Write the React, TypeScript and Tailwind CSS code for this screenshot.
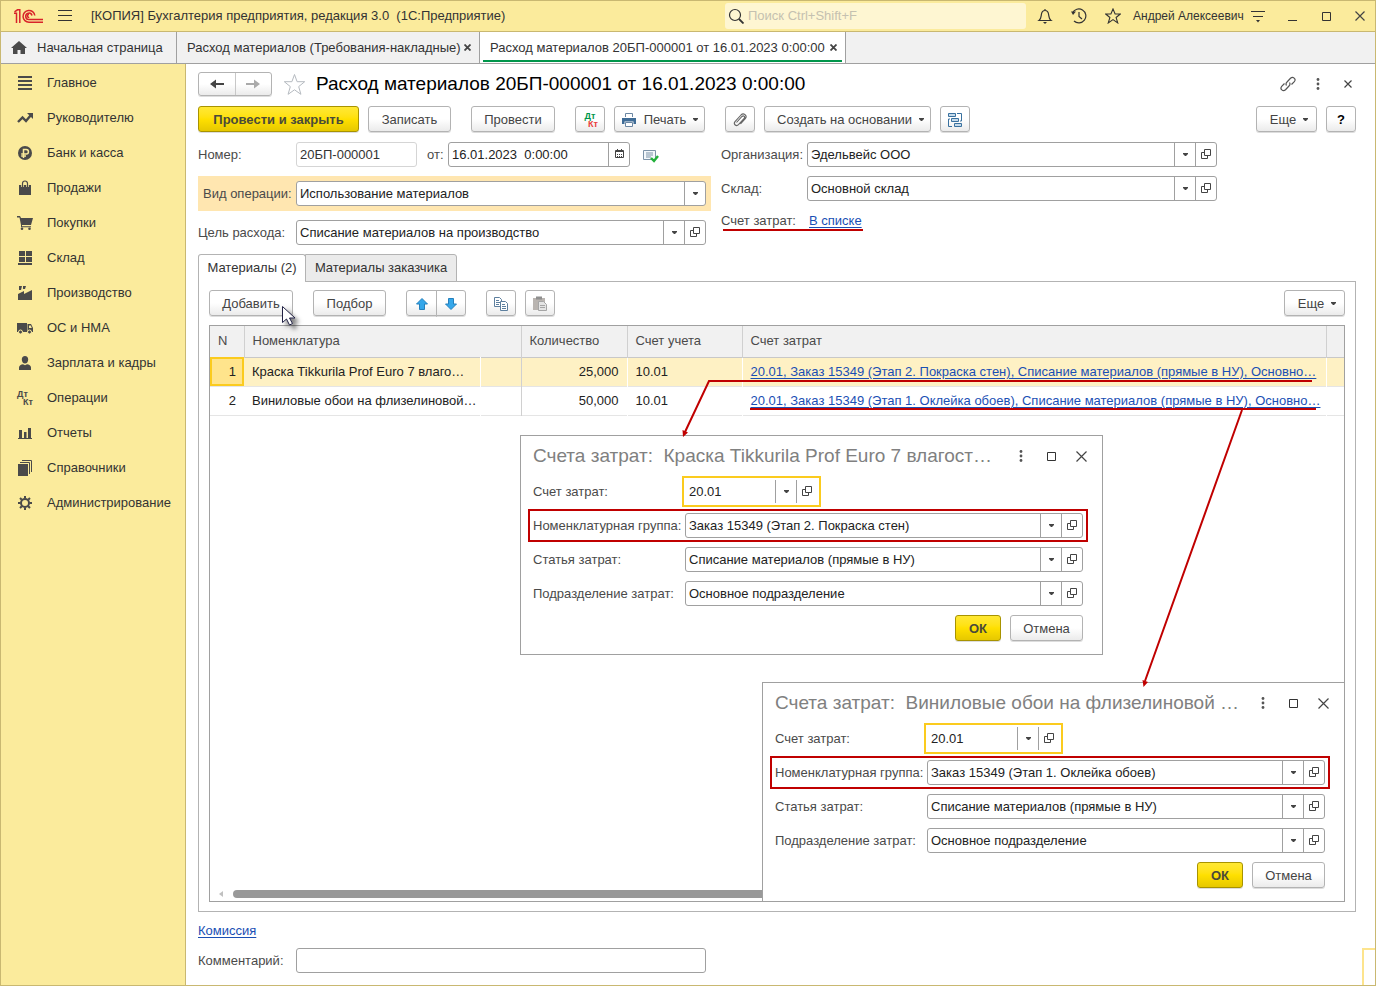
import React, { useState } from 'react';

const Glyph: React.FC<{ children: React.ReactNode; size?: number; className?: string }> = ({ children, size = 16, className = '' }) => (
  <svg width={size} height={size} viewBox={`0 0 ${size} ${size}`} fill="none" className={`shrink-0 ${className}`} aria-hidden="true">
    {children}
  </svg>
);

const Caret = () => (
  <svg width="5" height="3" viewBox="0 0 5 3" className="shrink-0" aria-hidden="true">
    <path d="M0 0h5v1L3 3H2L0 1z" fill="#444" />
  </svg>
);

const OpenIcon = () => (
  <Glyph size={10}>
    <path d="M3.5 0.5h6v6h-6z M3 3.5H0.5v6h6V7" stroke="#444" />
  </Glyph>
);

const CloseIcon: React.FC<{ size: number; color?: string }> = ({ size, color = '#444' }) => (
  <Glyph size={size}>
    <path d={`M0.5 0.5L${size - 0.5} ${size - 0.5}M${size - 0.5} 0.5L0.5 ${size - 0.5}`} stroke={color} strokeWidth="1.2" />
  </Glyph>
);

const DotsIcon = () => (
  <Glyph size={12}>
    <circle cx="6" cy="1.5" r="1.4" fill="#555" />
    <circle cx="6" cy="6" r="1.4" fill="#555" />
    <circle cx="6" cy="10.5" r="1.4" fill="#555" />
  </Glyph>
);

const DtKt: React.FC<{ top: string; bottom: string }> = ({ top, bottom }) => (
  <span className="flex w-4 shrink-0 flex-col text-[9px] leading-[8px] font-bold">
    <span className={top}>Дт</span>
    <span className={`self-end ${bottom}`}>Кт</span>
  </span>
);

const menu = [
  { label: 'Главное', icon: <path d="M1 1h14v2H1zM1 5h14v2H1zM1 9h14v2H1zM1 13h14v2H1z" fill="#4a4a4a" /> },
  {
    label: 'Руководителю',
    icon: (
      <>
        <path d="M1 12L5.5 7.5L9 11L14 5" stroke="#4a4a4a" strokeWidth="2.4" />
        <path d="M10 3h6v6z" fill="#4a4a4a" />
      </>
    ),
  },
  {
    label: 'Банк и касса',
    icon: (
      <>
        <circle cx="8" cy="8" r="7" fill="#4a4a4a" />
        <path d="M6.5 13V4.5h2.7a2.2 2.2 0 0 1 0 4.5H4.2M4.2 11H9" stroke="#fbeb9c" strokeWidth="1.5" />
      </>
    ),
  },
  {
    label: 'Продажи',
    icon: (
      <>
        <path d="M2 5h12v10H2z" fill="#4a4a4a" />
        <path d="M5.5 7V3.5a2.5 2.5 0 0 1 5 0V7" stroke="#fbeb9c" strokeWidth="2.6" />
        <path d="M5.5 7V3.5a2.5 2.5 0 0 1 5 0V7" stroke="#4a4a4a" strokeWidth="1.2" />
      </>
    ),
  },
  {
    label: 'Покупки',
    icon: (
      <>
        <path d="M0 1h3l1 2h12l-2 7H5v1.2h9v1H4V10L2.5 2.5H0z" fill="#4a4a4a" />
        <circle cx="5" cy="13.8" r="1.3" fill="#4a4a4a" />
        <circle cx="12.5" cy="13.8" r="1.3" fill="#4a4a4a" />
      </>
    ),
  },
  { label: 'Склад', icon: <path d="M2 1h6v5H2zM9 1h6v5H9zM2 7h6v5H2zM9 7h6v5H9zM1 13h14v2H1z" fill="#4a4a4a" /> },
  { label: 'Производство', icon: <path d="M1 15V9l6-3v3l8-4v10zM2 1h3l-1 4H2zM6 1h3L8 4H6z" fill="#4a4a4a" /> },
  {
    label: 'ОС и НМА',
    icon: (
      <>
        <path d="M0 3h10v9H0zM10.5 4H14l2 4v4h-5.5z" fill="#4a4a4a" />
        <path d="M12 5.5h1.8l1 2.5H12z" fill="#fbeb9c" />
        <circle cx="3.5" cy="12" r="2" fill="#4a4a4a" stroke="#fbeb9c" />
        <circle cx="12.5" cy="12" r="2" fill="#4a4a4a" stroke="#fbeb9c" />
      </>
    ),
  },
  {
    label: 'Зарплата и кадры',
    icon: <path d="M8 1c2 0 3.2 1.4 3.2 3.4C11.2 6.7 9.8 8.5 8 8.5S4.8 6.7 4.8 4.4C4.8 2.4 6 1 8 1zM2 15v-2.5C2 10.5 4 9.5 6 9.3l2 1 2-1c2 .2 4 1.2 4 3.2V15z" fill="#4a4a4a" />,
  },
  { label: 'Операции', icon: null },
  { label: 'Отчеты', icon: <path d="M1 13h14v1H1zM2 5h3v8H2zM7 7h2.5v6H7zM11 3h3v10h-3z" fill="#4a4a4a" /> },
  {
    label: 'Справочники',
    icon: (
      <>
        <path d="M1 4h10v12H1z" fill="#4a4a4a" />
        <path d="M3 2.5h9.5V14M5 0.5h9.5V12" stroke="#4a4a4a" />
      </>
    ),
  },
  {
    label: 'Администрирование',
    icon: (
      <>
        <circle cx="8" cy="8" r="4" stroke="#4a4a4a" strokeWidth="2" />
        <path d="M8 1v2.5M8 12.5V15M1 8h2.5M12.5 8H15M3 3l1.8 1.8M11.2 11.2L13 13M13 3l-1.8 1.8M4.8 11.2L3 13" stroke="#4a4a4a" strokeWidth="2" />
      </>
    ),
  },
];

interface BtnProps extends React.ButtonHTMLAttributes<HTMLButtonElement> {
  primary?: boolean;
}

const Btn: React.FC<BtnProps> = ({ primary, className = '', children, ...rest }) => (
  <button
    type="button"
    className={`flex h-[26px] shrink-0 items-center justify-center rounded-[3px] border pt-px shadow-[0_1px_0_#00000022] whitespace-nowrap ${
      primary
        ? 'border-[#a89300] bg-linear-to-b from-[#ffe833] via-[#ffe000] to-[#e6c800] font-bold text-[#4a4a3a]'
        : 'border-[#b3b3b3] bg-linear-to-b from-white via-white to-[#ebebeb] text-[#444]'
    } ${className}`}
    {...rest}
  >
    {children}
  </button>
);

interface FieldProps {
  id: string;
  value: string;
  className?: string;
  focused?: boolean;
}

// Text box with the drop-down and "open" buttons on its right
const ComboField: React.FC<FieldProps> = ({ id, value, className = '', focused }) => (
  <div
    className={`flex h-[25px] border bg-white text-[#222] ${
      focused ? 'border-transparent outline-2 outline-offset-1 outline-[#fbcb1e]' : 'rounded-[3px] border-[#a0a0a0]'
    } ${className}`}
  >
    <input id={id} defaultValue={value} className="w-0 min-w-0 flex-1 px-[3px] outline-none" />
    <button type="button" aria-label="Выбрать" className="flex w-[21px] items-center justify-center border-l border-[#a0a0a0]">
      <Caret />
    </button>
    <button type="button" aria-label="Открыть" className="flex w-[21px] items-center justify-center border-l border-[#a0a0a0] pb-px">
      <OpenIcon />
    </button>
  </div>
);

interface AccountDialogProps {
  id: string;
  title: string;
  group: string;
  className: string;
}

const AccountDialog: React.FC<AccountDialogProps> = ({ id, title, group, className }) => (
  <section role="dialog" aria-label={title} className={`absolute h-[220px] w-[583px] border border-[#a0a0a0] bg-white pr-[19px] pl-3 ${className}`}>
    <div className="flex h-[43px] items-center pb-[3px]">
      <h2 className="flex-1 text-[19px] whitespace-pre text-[#808080]">{title}</h2>
      <div className="-mr-1 flex items-center gap-5">
        <button type="button" aria-label="Еще действия"><DotsIcon /></button>
        <button type="button" aria-label="Развернуть">
          <Glyph size={9}><path d="M0.5 0.5h8v8h-8z" stroke="#333" /></Glyph>
        </button>
        <button type="button" aria-label="Закрыть"><CloseIcon size={11} /></button>
      </div>
    </div>
    <div className="flex flex-col gap-[9px]">
      <div className="flex items-center">
        <label htmlFor={`${id}-account`} className="w-[152px]">Счет затрат:</label>
        <ComboField id={`${id}-account`} value="20.01" focused className="w-[133px]" />
      </div>
      <div className="relative flex items-center">
        <label htmlFor={`${id}-group`} className="w-[152px] whitespace-nowrap">Номенклатурная группа:</label>
        <ComboField id={`${id}-group`} value={group} className="flex-1" />
        <div className="pointer-events-none absolute -inset-x-[5px] -inset-y-1 border-2 border-[#c00000]" />
      </div>
      <div className="flex items-center">
        <label htmlFor={`${id}-item`} className="w-[152px]">Статья затрат:</label>
        <ComboField id={`${id}-item`} value="Списание материалов (прямые в НУ)" className="flex-1" />
      </div>
      <div className="flex items-center">
        <label htmlFor={`${id}-unit`} className="w-[152px]">Подразделение затрат:</label>
        <ComboField id={`${id}-unit`} value="Основное подразделение" className="flex-1" />
      </div>
      <div className="flex justify-end gap-[9px]">
        <Btn primary className="w-[46px]">ОК</Btn>
        <Btn className="w-[73px]">Отмена</Btn>
      </div>
    </div>
  </section>
);

const rows = [
  { n: 1, name: 'Краска Tikkurila Prof Euro 7 влаго…', qty: '25,000', acc: '10.01', cost: '20.01, Заказ 15349 (Этап 2. Покраска стен), Списание материалов (прямые в НУ), Основно…' },
  { n: 2, name: 'Виниловые обои на флизелиновой…', qty: '50,000', acc: '10.01', cost: '20.01, Заказ 15349 (Этап 1. Оклейка обоев), Списание материалов (прямые в НУ), Основно…' },
];

const TitleBar = () => (
  <header className="flex h-[31px] items-center border-b border-[#c9b871] bg-[#fbeb9c] pr-[10px] pl-[13px] text-[#333]">
    <svg width="29" height="15" viewBox="0 0 29 15" fill="none" stroke="#d8232a" strokeWidth="1.5" aria-label="1С">
      <path d="M0 4.2H2.5V14M0.5 2.8L3.5 0.8H5.8V14" />
      <path d="M20.8 6.5A5.9 5.9 0 1 0 15 13.2H29" />
      <path d="M18 6.5A3.2 3.2 0 1 0 15 10.5H29" />
      <path d="M15 5.5a1.4 1.4 0 1 0 0.2 2.7" />
    </svg>
    <button type="button" aria-label="Меню" className="ml-[15px]">
      <Glyph size={14}><path d="M0 1.5h14M0 6.5h14M0 11.5h14" stroke="#333" /></Glyph>
    </button>
    <h1 className="ml-[19px] flex-1 whitespace-pre">[КОПИЯ] Бухгалтерия предприятия, редакция 3.0  (1С:Предприятие)</h1>
    <label className="flex h-[26px] w-[301px] items-center gap-1 rounded-[3px] bg-[#fef6d2] px-[3px]">
      <Glyph>
        <circle cx="7" cy="7" r="5.5" stroke="#333" strokeWidth="1.2" />
        <path d="M11 11l4.5 4.5" stroke="#333" strokeWidth="1.8" />
      </Glyph>
      <input type="search" aria-label="Поиск" placeholder="Поиск Ctrl+Shift+F" className="min-w-0 flex-1 outline-none placeholder:text-[#c5c1b0]" />
    </label>
    <button type="button" aria-label="Оповещения" className="ml-[11px]">
      <Glyph>
        <path d="M8 1v1.5M2 12.5h12c-2-1.5-2-3-2.3-5.5C11.4 4 10 2.5 8 2.5S4.6 4 4.3 7C4 9.5 4 11 2 12.5z" stroke="#333" strokeWidth="1.2" />
        <path d="M6 14h4l-2 2z" fill="#333" />
      </Glyph>
    </button>
    <button type="button" aria-label="История" className="ml-[18px]">
      <Glyph>
        <path d="M1.5 5A7 7 0 1 1 3 13M8 4v4.5l3 2.5" stroke="#333" strokeWidth="1.2" />
        <path d="M0 3.5h5L2 7z" fill="#333" />
      </Glyph>
    </button>
    <button type="button" aria-label="Избранное" className="ml-[18px]">
      <Glyph>
        <path d="M8 1l2.1 5h5.2l-4.2 3.5 1.6 5.4L8 11.600l-4.7 3.3 1.6-5.4L0.7 6h5.2z" stroke="#333" strokeWidth="1.1" />
      </Glyph>
    </button>
    <span className="ml-3 w-[104px] text-[12px] whitespace-nowrap">Андрей Алексеевич</span>
    <button type="button" aria-label="Настройки" className="ml-[13px]">
      <Glyph>
        <path d="M1 3.5h14M3 8.5h10" stroke="#333" strokeWidth="1.2" />
        <path d="M6 12h4l-2 2.5z" fill="#333" />
      </Glyph>
    </button>
    <button type="button" aria-label="Свернуть" className="ml-[22px]">
      <Glyph size={9}><path d="M0 8.5h9" stroke="#333" /></Glyph>
    </button>
    <button type="button" aria-label="Развернуть" className="ml-[25px]">
      <Glyph size={9}><path d="M0.5 0.5h8v8h-8z" stroke="#333" /></Glyph>
    </button>
    <button type="button" aria-label="Закрыть" className="ml-[24px]">
      <CloseIcon size={10} />
    </button>
  </header>
);

const TabBar = () => (
  <nav className="flex h-8 shrink-0 border-b border-[#a0a0a0] bg-[#f1f1f1] text-[#333]">
    <a href="#home" className="flex w-[176px] shrink-0 items-center gap-[10px] border-r border-[#a0a0a0] pl-[10px]">
      <Glyph><path d="M8 1L16 8h-2v6H9.500V10h-3v4H2V8H0z" fill="#4a4a4a" /></Glyph>
      Начальная страница
    </a>
    <div className="flex w-[303px] shrink-0 items-center justify-between border-r border-[#a0a0a0] pr-2 pl-[10px]">
      <a href="#list" className="whitespace-nowrap">Расход материалов (Требования-накладные)</a>
      <button type="button" aria-label="Закрыть вкладку">
        <Glyph size={7}><path d="M0.5 0.5l6 6M6.5 0.5l-6 6" stroke="#444" strokeWidth="1.8" /></Glyph>
      </button>
    </div>
    <div className="flex w-[366px] shrink-0 border-r border-[#a0a0a0] bg-white px-[3px] pb-px">
      <div className="flex flex-1 items-center justify-between border-b-2 border-[#00964b] pt-[3px] pr-[5px] pl-[7px]">
        <a href="#doc" className="whitespace-nowrap">Расход материалов 20БП-000001 от 16.01.2023 0:00:00</a>
        <button type="button" aria-label="Закрыть вкладку">
          <Glyph size={7}><path d="M0.5 0.5l6 6M6.5 0.5l-6 6" stroke="#444" strokeWidth="1.8" /></Glyph>
        </button>
      </div>
    </div>
  </nav>
);

const Sidebar = () => (
  <aside className="w-[185px] shrink-0 border-r border-[#c9b871] bg-[#fbeb9c] pt-px">
    {menu.map(item => (
      <a key={item.label} href="#section" className="flex h-[35px] items-center gap-[14px] pl-4 text-[#333]">
        {item.icon ? <Glyph>{item.icon}</Glyph> : <DtKt top="text-[#4a4a4a]" bottom="text-[#4a4a4a]" />}
        {item.label}
      </a>
    ))}
  </aside>
);

const Toolbar = () => (
  <div className="mt-[10px] flex gap-5">
    <div className="flex gap-[9px]">
      <Btn primary className="w-[161px]">Провести и закрыть</Btn>
      <Btn className="w-[83px]">Записать</Btn>
    </div>
    <Btn className="w-[84px]">Провести</Btn>
    <div className="flex gap-[9px]">
      <Btn className="w-[30px]" aria-label="Проводки"><DtKt top="text-[#00964b]" bottom="text-[#e8403c]" /></Btn>
      <Btn className="w-[91px] gap-[7px]">
        <Glyph>
          <path d="M4.5 5V1.5h7V5M4.5 10.5h7v4h-7z" stroke="#6b87a3" fill="#fff" />
          <path d="M1 6h14v6h-2.5V9.5h-9V12H1z" fill="#3f6c96" />
        </Glyph>
        Печать
        <Caret />
      </Btn>
    </div>
    <div className="flex gap-[9px]">
      <Btn className="w-[30px]" aria-label="Прикрепленные файлы">
        <Glyph>
          <path d="M4.500 10.500L10 4.500c1.500-1.500 3.500 0.300 2.200 1.800L6.500 12.700C4.300 15 1 12.200 3 9.700L9 3c2.500-2.600 6.800 0.500 4.300 3.700L8.500 12" stroke="#666" strokeWidth="1.1" />
        </Glyph>
      </Btn>
      <Btn className="w-[167px] gap-[7px] pl-[6px]">
        Создать на основании
        <Caret />
      </Btn>
      <Btn className="w-[30px]" aria-label="Структура подчиненности">
        <Glyph>
          <path d="M1.5 1.5h7v3h-7zM4.5 6.5h7v3h-7zM7.5 11.5h7v3h-7z" fill="#c5daea" stroke="#39719f" />
          <path d="M10 1.5h4.5V9H13M5 14.5H1.5V7H3" stroke="#39719f" />
        </Glyph>
      </Btn>
    </div>
    <div className="ml-auto flex gap-[9px]">
      <Btn className="w-[61px] gap-[7px] pl-[5px]">Еще<Caret /></Btn>
      <Btn className="w-[30px] font-bold text-black">?</Btn>
    </div>
  </div>
);

const App: React.FC = () => {
  const [selected, setSelected] = useState(1);

  return (
    <div className="relative flex min-h-screen flex-col border border-[#c9b871] bg-white font-['Liberation_Sans',Arial,sans-serif] text-[13px] leading-4 text-[#4a4a4a]">
      <TitleBar />
      <TabBar />
      <div className="flex flex-1">
        <Sidebar />
        <main className="relative flex min-w-0 flex-1 flex-col pt-2 pr-[19px] pb-3 pl-3">
          <div className="flex h-6 items-center">
            <div className="flex h-6 w-[74px] rounded-[3px] border border-[#b3b3b3] bg-linear-to-b from-white via-white to-[#ebebeb] shadow-[0_1px_0_#00000022]">
              <button type="button" aria-label="Назад" className="flex flex-1 items-center justify-center border-r border-[#c8c8c8]">
                <Glyph size={14}><path d="M0 7l6-4.500V6h8v2H6v3.500z" fill="#444" /></Glyph>
              </button>
              <button type="button" aria-label="Вперед" className="flex flex-1 items-center justify-center">
                <Glyph size={14}><path d="M14 7L8 2.500V6H0v2h8v3.500z" fill="#aaa" /></Glyph>
              </button>
            </div>
            <button type="button" aria-label="В избранное" className="ml-[11px]">
              <Glyph size={23}>
                <path d="M11.5 1.5l2.6 7.2h7.6l-6 4.9 2.2 7.7-6.4-4.5-6.4 4.5 2.2-7.7-6-4.9h7.6z" stroke="#b5bac0" />
              </Glyph>
            </button>
            <h2 className="ml-[10px] flex-1 text-[19px] leading-6 text-black">Расход материалов 20БП-000001 от 16.01.2023 0:00:00</h2>
            <div className="mr-1 flex items-center">
              <button type="button" aria-label="Ссылка">
                <Glyph>
                  <path d="M6.500 9.500c-1-1.500-0.500-2.500 0.500-3.500l3.500-3.700c2.500-2.300 6 0.700 3.800 3.400L11.500 8.500M9.500 6.500c1 1.500 0.500 2.500-0.500 3.500l-3.500 3.700c-2.500 2.300-6-0.700-3.800-3.400L4.500 7.500" stroke="#555" strokeWidth="1.2" />
                </Glyph>
              </button>
              <button type="button" aria-label="Еще действия" className="ml-4"><DotsIcon /></button>
              <button type="button" aria-label="Закрыть" className="ml-5"><CloseIcon size={8} /></button>
            </div>
          </div>

          <Toolbar />

          <div className="mt-[10px] flex gap-[10px]">
            <div className="flex w-[513px] shrink-0 flex-col gap-[9px]">
              <div className="flex items-center">
                <label htmlFor="number" className="w-[98px]">Номер:</label>
                <input id="number" defaultValue="20БП-000001" readOnly className="h-[25px] w-[121px] rounded-[3px] border border-[#d5d5d5] px-[3px] text-[#333]" />
                <label htmlFor="date" className="ml-[10px] w-[21px]">от:</label>
                <div className="flex h-[25px] w-[182px] rounded-[3px] border border-[#a0a0a0] text-[#222]">
                  <input id="date" defaultValue="16.01.2023  0:00:00" className="min-w-0 flex-1 px-[3px] outline-none" />
                  <button type="button" aria-label="Календарь" className="flex w-[21px] items-center justify-center border-l border-[#a0a0a0] pb-[3px]">
                    <Glyph size={9}>
                      <path d="M0.5 1.5h8v7h-8zM0 2.5h9M2.5 0v2M6.5 0v2" stroke="#444" />
                      <path d="M2 5.5h5M2 7.5h5" stroke="#444" strokeDasharray="1 1" />
                    </Glyph>
                  </button>
                </div>
                <Glyph className="ml-[13px]">
                  <path d="M0.5 3.5h12v9h-12z" fill="#f4f8fb" stroke="#7d93a8" />
                  <path d="M3 6h7M3 8h7M3 10h5" stroke="#7d93a8" />
                  <path d="M8 11l3 3 4-5" stroke="#22b03a" strokeWidth="2.4" />
                </Glyph>
              </div>
              <div className="flex h-[35px] items-center bg-[#ffe6b0] px-[5px]">
                <label htmlFor="kind" className="w-[93px] whitespace-nowrap">Вид операции:</label>
                <div className="relative flex h-[25px] flex-1">
                  <select id="kind" className="w-full appearance-none rounded-[3px] border border-[#a0a0a0] bg-white px-[3px] text-[#222]">
                    <option>Использование материалов</option>
                  </select>
                  <span className="pointer-events-none absolute inset-y-px right-px flex w-[21px] items-center justify-center border-l border-[#a0a0a0]">
                    <Caret />
                  </span>
                </div>
              </div>
              <div className="flex items-center pr-[5px]">
                <label htmlFor="purpose" className="w-[98px]">Цель расхода:</label>
                <ComboField id="purpose" value="Списание материалов на производство" className="flex-1" />
              </div>
            </div>
            <div className="flex flex-col gap-[9px]">
              <div className="flex items-center">
                <label htmlFor="org" className="w-[86px]">Организация:</label>
                <ComboField id="org" value="Эдельвейс ООО" className="w-[410px]" />
              </div>
              <div className="flex items-center">
                <label htmlFor="store" className="w-[86px]">Склад:</label>
                <ComboField id="store" value="Основной склад" className="w-[410px]" />
              </div>
              <div className="mt-[3px] flex">
                <span className="w-[88px]">Счет затрат:</span>
                <a href="#accounts" className="text-[#1a4fb4] underline underline-offset-2">В списке</a>
              </div>
            </div>
          </div>

          <div role="tablist" className="relative z-10 -mb-px mt-[9px] flex h-7 text-[#333]">
            <button type="button" role="tab" aria-selected="true" className="w-[108px] rounded-t-[3px] border border-b-0 border-[#b3b3b3] bg-white pb-px">
              Материалы (2)
            </button>
            <button type="button" role="tab" aria-selected="false" className="-ml-px w-[152px] rounded-tr-[3px] border border-[#b3b3b3] bg-[#ebebeb]">
              Материалы заказчика
            </button>
          </div>

          <div className="flex flex-1 flex-col border border-[#b3b3b3] px-[10px] pt-2 pb-[9px]">
            <div className="flex gap-5">
              <Btn className="w-[84px]">Добавить</Btn>
              <Btn className="w-[73px]">Подбор</Btn>
              <div className="flex">
                <Btn className="w-[31px] rounded-r-none" aria-label="Вверх">
                  <Glyph size={12}><path d="M6 0.5l5.500 5.500h-3v5.500h-5V6h-3z" fill="#35a7ea" stroke="#2480bd" /></Glyph>
                </Btn>
                <Btn className="-ml-px w-[30px] rounded-l-none" aria-label="Вниз">
                  <Glyph size={12}><path d="M6 11.5L0.5 6h3V0.5h5V6h3z" fill="#35a7ea" stroke="#2480bd" /></Glyph>
                </Btn>
              </div>
              <div className="flex gap-[9px]">
                <Btn className="w-[30px]" aria-label="Копировать">
                  <Glyph>
                    <path d="M1.5 1.5h5l2 2v7h-7z" fill="#fff" stroke="#5d7f9e" />
                    <path d="M3 4.5h3M3 6.5h4M3 8.5h3" stroke="#5d7f9e" />
                    <path d="M7.5 5.5h5l2 2v7h-7z" fill="#fff" stroke="#5d7f9e" />
                    <path d="M9 8.5h3M9 10.5h4M9 12.5h4" stroke="#5d7f9e" />
                  </Glyph>
                </Btn>
                <Btn className="w-[30px]" aria-label="Вставить" disabled>
                  <Glyph>
                    <path d="M1 2h12v12H1z" fill="#b9b4b0" />
                    <path d="M4 0.5h6v3H4z" fill="#8f8f8f" />
                    <path d="M6.5 5.5h5l3 3v6h-8z" fill="#e4e4e4" stroke="#a5a5a5" />
                    <path d="M8 9.5h5M8 11.5h5" stroke="#a5a5a5" />
                  </Glyph>
                </Btn>
              </div>
              <Btn className="ml-auto w-[61px] gap-[7px] pl-[5px]">Еще<Caret /></Btn>
            </div>

            <div className="relative mt-[9px] flex min-h-[577px] flex-1 flex-col justify-between border border-[#a0a0a0]">
              <table className="w-full table-fixed border-collapse text-left">
                <colgroup>
                  <col className="w-[34px]" />
                  <col className="w-[236px]" />
                  <col className="w-[41px]" />
                  <col className="w-[106px]" />
                  <col className="w-[115px]" />
                  <col />
                  <col className="w-[18px]" />
                </colgroup>
                <thead>
                  <tr className="h-[31px] border-b border-[#c8c8c8] bg-[#f1f1f1]">
                    <th className="border-r border-[#d0d0d0] pl-2 font-normal">N</th>
                    <th colSpan={2} className="border-r border-[#d0d0d0] pl-2 font-normal">Номенклатура</th>
                    <th className="border-r border-[#d0d0d0] pl-2 font-normal">Количество</th>
                    <th className="border-r border-[#d0d0d0] pl-2 font-normal">Счет учета</th>
                    <th className="border-r border-[#d0d0d0] pl-2 font-normal">Счет затрат</th>
                    <th />
                  </tr>
                </thead>
                <tbody className="text-[#222]">
                  {rows.map(row => {
                    const active = row.n === selected;
                    const line = active ? 'border-white' : 'border-transparent';
                    return (
                      <tr key={row.n} onClick={() => setSelected(row.n)} className={`h-[29px] border-b border-[#e5e5e5] ${active ? 'bg-[#fef1c4]' : ''}`}>
                        <td className={`pr-2 text-right ${active ? 'bg-[#ffe48c] outline-2 -outline-offset-2 outline-[#fbcb1e]' : ''}`}>{row.n}</td>
                        <td className={`border-r pl-2 whitespace-nowrap ${line}`}>{row.name}</td>
                        <td className="border-r border-[#d0d0d0]" />
                        <td className={`border-r pr-2 text-right ${line}`}>{row.qty}</td>
                        <td className={`border-r pl-2 ${line}`}>{row.acc}</td>
                        <td className={`border-r pl-2 whitespace-nowrap ${line}`}>
                          <a href="#cost" className="text-[#1a4fb4] underline underline-offset-2">{row.cost}</a>
                        </td>
                        <td />
                      </tr>
                    );
                  })}
                </tbody>
              </table>
              <div className="flex items-center gap-[10px] pb-[3px] pl-[9px]">
                <svg width="4" height="6" viewBox="0 0 4 6" aria-hidden="true"><path d="M4 0v6L0 3z" fill="#c0c0c0" /></svg>
                <div className="h-2 w-3/4 rounded-full bg-[#999]" />
              </div>

              <AccountDialog id="paint" title="Счета затрат:  Краска Tikkurila Prof Euro 7 влагост…" group="Заказ 15349 (Этап 2. Покраска стен)" className="top-[109px] left-[310px]" />
              <AccountDialog id="wallpaper" title="Счета затрат:  Виниловые обои на флизелиновой …" group="Заказ 15349 (Этап 1. Оклейка обоев)" className="-right-px -bottom-px" />
            </div>
          </div>

          <a href="#commission" className="mt-[11px] self-start text-[#1a4fb4] underline underline-offset-2">Комиссия</a>
          <div className="mt-[9px] flex items-center">
            <label htmlFor="comment" className="w-[98px]">Комментарий:</label>
            <input id="comment" className="h-[25px] w-[410px] rounded-[3px] border border-[#a0a0a0] px-[3px]" />
          </div>
          <div className="absolute right-0 bottom-0 h-[37px] w-[13px] border-t-2 border-l-2 border-[#fde48d]" />
        </main>
      </div>

      {/* callout lines and mouse pointer drawn over the form */}
      <svg className="pointer-events-none absolute inset-0 z-20 h-full w-full" fill="none" aria-hidden="true">
        <defs>
          <filter id="pointer-shadow" x="-50%" y="-50%" width="220%" height="220%">
            <feDropShadow dx="4" dy="4" stdDeviation="2" floodOpacity="0.5" />
          </filter>
        </defs>
        <g stroke="#c00000" strokeWidth="2">
          <path d="M722 229H862" />
          <path d="M1311 380H708L684 431" />
          <path d="M749 408H1315M1241 409L1144 680" />
        </g>
        <path d="M682 436L681.500 429L687 431.500zM1142.500 686L1141.500 679L1147 681z" fill="#c00000" />
        <path d="M281.500 305.500v16l4-3.500 3 6 3-1.500-3-5.500h5.500z" fill="#fff" stroke="#222244" filter="url(#pointer-shadow)" />
      </svg>
    </div>
  );
};

export default App;
